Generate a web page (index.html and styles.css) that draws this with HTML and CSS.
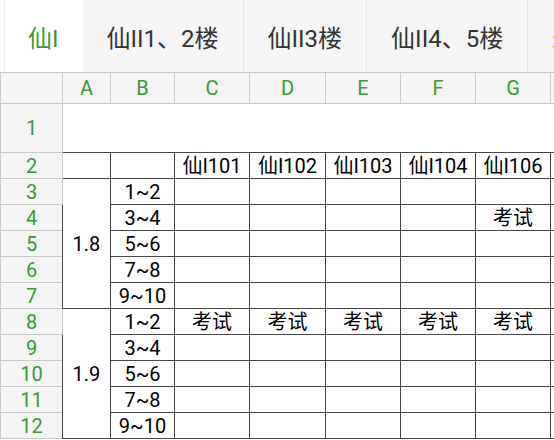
FILE: index.html
```html
<!DOCTYPE html>
<html lang="zh-CN">
<head>
  <meta charset="UTF-8" />
  <meta name="viewport" content="width=device-width, initial-scale=1" />
  <title>仙I</title>
  <link rel="stylesheet" href="styles.css">
</head>
<body>

<!-- SHEET TABS -->
<div class="tabs">
  <div class="tab active">仙I</div>
  <div class="tab">仙II1、2楼</div>
  <div class="tab">仙II3楼</div>
  <div class="tab">仙II4、5楼</div>
  <div class="tab">米兰</div>
</div>

<!-- GRID -->
<table class="sheet">
  <colgroup>
    <col class="col-num">
    <col class="col-a">
    <col class="col-b">
    <col class="col-std">
    <col class="col-d">
    <col class="col-std">
    <col class="col-std">
    <col class="col-std">
    <col class="col-rest">
  </colgroup>
  <thead>
    <tr class="head-row">
      <th class="corner"></th>
      <th>A</th>
      <th>B</th>
      <th>C</th>
      <th>D</th>
      <th>E</th>
      <th>F</th>
      <th>G</th>
      <th></th>
    </tr>
  </thead>
  <tbody>
    <tr class="row-title">
      <th class="num">1</th>
      <td colspan="8"></td>
    </tr>
    <tr class="row-rooms">
      <th class="num">2</th>
      <td></td><td></td>
      <td>仙I101</td><td>仙I102</td><td>仙I103</td><td>仙I104</td><td>仙I106</td>
      <td></td>
    </tr>
    <tr>
      <th class="num">3</th>
      <td rowspan="5">1.8</td>
      <td>1~2</td>
      <td></td><td></td><td></td><td></td><td></td><td></td>
    </tr>
    <tr>
      <th class="num">4</th>
      <td>3~4</td>
      <td></td><td></td><td></td><td></td><td>考试</td><td></td>
    </tr>
    <tr>
      <th class="num">5</th>
      <td>5~6</td>
      <td></td><td></td><td></td><td></td><td></td><td></td>
    </tr>
    <tr>
      <th class="num">6</th>
      <td>7~8</td>
      <td></td><td></td><td></td><td></td><td></td><td></td>
    </tr>
    <tr>
      <th class="num">7</th>
      <td>9~10</td>
      <td></td><td></td><td></td><td></td><td></td><td></td>
    </tr>
    <tr>
      <th class="num">8</th>
      <td rowspan="5">1.9</td>
      <td>1~2</td>
      <td>考试</td><td>考试</td><td>考试</td><td>考试</td><td>考试</td><td></td>
    </tr>
    <tr>
      <th class="num">9</th>
      <td>3~4</td>
      <td></td><td></td><td></td><td></td><td></td><td></td>
    </tr>
    <tr>
      <th class="num">10</th>
      <td>5~6</td>
      <td></td><td></td><td></td><td></td><td></td><td></td>
    </tr>
    <tr>
      <th class="num">11</th>
      <td>7~8</td>
      <td></td><td></td><td></td><td></td><td></td><td></td>
    </tr>
    <tr>
      <th class="num">12</th>
      <td>9~10</td>
      <td></td><td></td><td></td><td></td><td></td><td></td>
    </tr>
  </tbody>
</table>

</body>
</html>
```

FILE: styles.css
```css
:root {
  --green: #3a9a3a;
  --text: #333333;
  --tab-bg: #f5f5f5;
  --tab-line: #e6e6e6;
  --head-bg: #f4f4f4;
  --head-line: #c9c9c9;
  --grid-line: #484848;
}

* {
  box-sizing: border-box;
  margin: 0;
  padding: 0;
}

body {
  width: 554px;
  height: 440px;
  overflow: hidden;
  background: #ffffff;
  font-family: Roboto, "Noto Sans CJK SC", sans-serif;
  color: #000000;
}

/* SHEET TABS */
.tabs {
  display: flex;
  height: 72px;
  padding-left: 4px;
  background: #ffffff;
  white-space: nowrap;
}

.tab {
  flex: none;
  display: flex;
  align-items: center;
  padding: 0 24px;
  font-size: 24px;
  color: var(--text);
  background: var(--tab-bg);
  border-right: 1px solid var(--tab-line);
}

.tab.active {
  background: #ffffff;
  color: var(--green);
  border-left: 1px solid #eeeeee;
  border-right: none;
  padding: 0 24px 0 23px;
}

/* GRID */
.sheet {
  table-layout: fixed;
  border-collapse: collapse;
  width: 600px;
}

.col-num { width: 62px; }
.col-a { width: 48px; }
.col-b { width: 64px; }
.col-std { width: 75px; }
.col-d { width: 76px; }
.col-rest { width: 50px; }

.sheet th,
.sheet td {
  border: 1px solid var(--grid-line);
  text-align: center;
  vertical-align: middle;
  font-weight: normal;
  white-space: nowrap;
  overflow: hidden;
  line-height: 1;
}

.sheet td {
  font-size: 20px;
  color: #000000;
}

.head-row th,
.sheet th.num {
  background: var(--head-bg);
  border-color: var(--head-line);
  color: var(--green);
  font-size: 20px;
}

.head-row th {
  height: 31px;
}

.row-title th,
.row-title td {
  height: 49px;
}

.row-rooms th,
.row-rooms td {
  height: 25px;
}

tbody tr {
  height: 26px;
}
```
